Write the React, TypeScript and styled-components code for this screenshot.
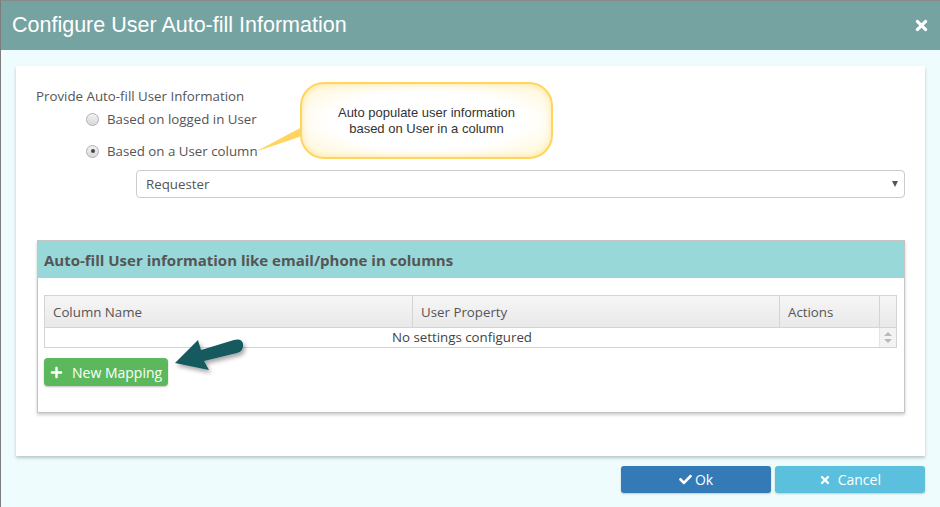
import React, { useState } from "react";
import styled, { createGlobalStyle } from "styled-components";
import { FaCheck, FaTimes, FaPlus } from "react-icons/fa";

const GlobalStyle = createGlobalStyle`
  html, body {
    margin: 0;
    padding: 0;
    background: #effcfd;
  }
  * {
    box-sizing: border-box;
  }
`;

const Page = styled.div`
  width: 940px;
  height: 507px;
  display: flex;
  flex-direction: column;
  background: #effcfd;
  border-left: 1px solid #7d7d7d;
  border-top: 1px solid #8a8a8a;
  font-family: "Open Sans", "Liberation Sans", sans-serif;
  color: #555;
  overflow: hidden;
`;

const Header = styled.div`
  height: 49px;
  flex-shrink: 0;
  display: flex;
  align-items: center;
  justify-content: space-between;
  padding: 0 10px 0 11px;
  background: #75a3a2;
  color: #fff;
  font-family: "Liberation Sans", Arial, sans-serif;
  font-size: 21.5px;
`;

const CloseButton = styled.span`
  display: flex;
  font-size: 17px;
  cursor: pointer;
`;

const Body = styled.div`
  flex: 1;
  display: flex;
  flex-direction: column;
  padding: 16px 15px 0 15px;
`;

const Card = styled.div`
  position: relative;
  height: 390px;
  background: #fff;
  padding: 22px 20px 0 20px;
  box-shadow: 0 2px 3px rgba(110, 140, 140, 0.45);
`;

const FieldLabel = styled.div`
  font-size: 13.3px;
  line-height: 16px;
  color: #555;
`;

const RadioList = styled.div`
  display: flex;
  flex-direction: column;
  gap: 14px;
  padding: 6px 0 0 50px;
`;

const RadioRow = styled.label`
  display: flex;
  align-items: center;
  gap: 8px;
  font-size: 13.3px;
  line-height: 18px;
  color: #555;
  cursor: pointer;
`;

const RadioDot = styled.span<{ $checked: boolean }>`
  position: relative;
  width: 13px;
  height: 13px;
  border-radius: 50%;
  border: 1px solid #b0b0b0;
  background: linear-gradient(#f2f2f2, #d8d8d8);

  &::after {
    content: "";
    display: ${(p) => (p.$checked ? "block" : "none")};
    position: absolute;
    left: 3.5px;
    top: 3.5px;
    width: 4px;
    height: 4px;
    border-radius: 50%;
    background: #444;
  }
`;

const SelectBox = styled.div`
  margin: 10px 0 0 100px;
  height: 28px;
  display: flex;
  align-items: center;
  justify-content: space-between;
  padding: 0 6px 0 9px;
  border: 1px solid #ccc;
  border-radius: 4px;
  font-size: 13.3px;
  color: #555;
`;

const Caret = styled.span`
  width: 0;
  height: 0;
  border-left: 3.5px solid transparent;
  border-right: 3.5px solid transparent;
  border-top: 6px solid #555;
`;

const Panel = styled.div`
  margin: 42px 0 0 1px;
  height: 173px;
  border: 1px solid #c4c4c4;
  box-shadow: 0 2px 3px rgba(0, 0, 0, 0.2);
  display: flex;
  flex-direction: column;
`;

const PanelHeader = styled.div`
  height: 37px;
  display: flex;
  align-items: center;
  padding-left: 6px;
  background: #98d8d8;
  font-size: 15px;
  font-weight: 700;
  color: #555;
`;

const PanelBody = styled.div`
  padding: 17px 7px 0 6px;
  display: flex;
  flex-direction: column;
  align-items: flex-start;
  gap: 10px;
`;

const Grid = styled.div`
  width: 100%;
  border: 1px solid #d4d4d4;
`;

const GridHead = styled.div`
  display: grid;
  grid-template-columns: 368px 367px 100px 1fr;
  height: 32px;
  background: linear-gradient(#f6f6f6, #e9e9e9);
  border-bottom: 1px solid #d4d4d4;
`;

const HeadCell = styled.div<{ $last?: boolean }>`
  display: flex;
  align-items: center;
  padding-left: 8px;
  font-size: 13.3px;
  color: #555;
  border-right: ${(p) => (p.$last ? "none" : "1px solid #d4d4d4")};
`;

const GridRow = styled.div`
  display: flex;
  height: 19px;
`;

const EmptyText = styled.div`
  flex: 1;
  text-align: center;
  font-size: 13.3px;
  line-height: 19px;
  color: #444;
`;

const Scroller = styled.div`
  width: 17px;
  display: flex;
  flex-direction: column;
  align-items: center;
  justify-content: center;
  gap: 3px;
  background: #f3f3f3;
  border-left: 1px solid #e4e4e4;
`;

const ScrollArrow = styled.span<{ $up?: boolean }>`
  width: 0;
  height: 0;
  border-left: 4px solid transparent;
  border-right: 4px solid transparent;
  ${(p) =>
    p.$up ? "border-bottom: 4px solid #b8b8b8;" : "border-top: 4px solid #b8b8b8;"}
`;

const GreenButton = styled.button`
  height: 28px;
  display: flex;
  align-items: center;
  gap: 9px;
  padding: 0 6px 0 6px;
  border: none;
  border-radius: 4px;
  background: #5cb85c;
  color: #fff;
  font-family: inherit;
  font-size: 14px;
  box-shadow: 0 1px 2px rgba(0, 0, 0, 0.25);
  cursor: pointer;
`;

const Callout = styled.div`
  position: absolute;
  left: 284px;
  top: 16px;
  width: 253px;
  height: 77px;
  display: flex;
  align-items: center;
  justify-content: center;
  text-align: center;
  border: 2px solid #ffd460;
  border-radius: 24px;
  background: radial-gradient(ellipse at center, #ffffff 55%, #fff6d2 100%);
  box-shadow: inset 0 0 6px rgba(255, 214, 90, 0.55);
  font-family: "Liberation Sans", Arial, sans-serif;
  font-size: 13px;
  line-height: 16px;
  color: #333;
`;

const Overlay = styled.svg`
  position: absolute;
  left: 0;
  top: 0;
  width: 909px;
  height: 390px;
  pointer-events: none;
  overflow: visible;
`;

const Footer = styled.div`
  display: flex;
  justify-content: flex-end;
  gap: 4px;
  padding-top: 10px;
`;

const FooterButton = styled.button<{ $tone: "primary" | "info" }>`
  width: 150px;
  height: 27px;
  display: flex;
  align-items: center;
  justify-content: center;
  gap: 3px;
  border: none;
  border-radius: 3px;
  background: ${(p) => (p.$tone === "primary" ? "#337ab7" : "#5bc0de")};
  color: #fff;
  font-family: inherit;
  font-size: 14px;
  box-shadow: 0 1px 2px rgba(0, 0, 0, 0.2);
  cursor: pointer;
`;

export default function App() {
  const [mode, setMode] = useState<"logged" | "column">("column");

  return (
    <>
      <GlobalStyle />
      <Page>
        <Header>
          <span>Configure User Auto-fill Information</span>
          <CloseButton>
            <FaTimes />
          </CloseButton>
        </Header>
        <Body>
          <Card>
            <FieldLabel>Provide Auto-fill User Information</FieldLabel>
            <RadioList>
              <RadioRow onClick={() => setMode("logged")}>
                <RadioDot $checked={mode === "logged"} />
                Based on logged in User
              </RadioRow>
              <RadioRow onClick={() => setMode("column")}>
                <RadioDot $checked={mode === "column"} />
                Based on a User column
              </RadioRow>
            </RadioList>
            <SelectBox>
              <span>Requester</span>
              <Caret />
            </SelectBox>

            <Panel>
              <PanelHeader>Auto-fill User information like email/phone in columns</PanelHeader>
              <PanelBody>
                <Grid>
                  <GridHead>
                    <HeadCell>Column Name</HeadCell>
                    <HeadCell>User Property</HeadCell>
                    <HeadCell>Actions</HeadCell>
                    <HeadCell $last />
                  </GridHead>
                  <GridRow>
                    <EmptyText>No settings configured</EmptyText>
                    <Scroller>
                      <ScrollArrow $up />
                      <ScrollArrow />
                    </Scroller>
                  </GridRow>
                </Grid>
                <GreenButton>
                  <FaPlus size={13} />
                  New Mapping
                </GreenButton>
              </PanelBody>
            </Panel>

            <Overlay viewBox="0 0 909 390">
              <defs>
                <filter id="arrowShadow" x="-20%" y="-20%" width="160%" height="180%">
                  <feDropShadow dx="2" dy="3" stdDeviation="2" floodColor="#000" floodOpacity="0.35" />
                </filter>
              </defs>
              <path d="M239 86 L286 61 L286 70 Z" fill="#ffd460" />
              <path
                d="M159 297 L182 274 L185 284 L218 274 Q226 272 227 278 Q228 285 221 287 L188 295 L193 304 Z"
                fill="#135a60"
                filter="url(#arrowShadow)"
              />
            </Overlay>
            <Callout>
              Auto populate user information
              <br />
              based on User in a column
            </Callout>
          </Card>
          <Footer>
            <FooterButton $tone="primary">
              <FaCheck size={13} />
              Ok
            </FooterButton>
            <FooterButton $tone="info">
              <FaTimes size={12} />
              &nbsp;Cancel
            </FooterButton>
          </Footer>
        </Body>
      </Page>
    </>
  );
}
